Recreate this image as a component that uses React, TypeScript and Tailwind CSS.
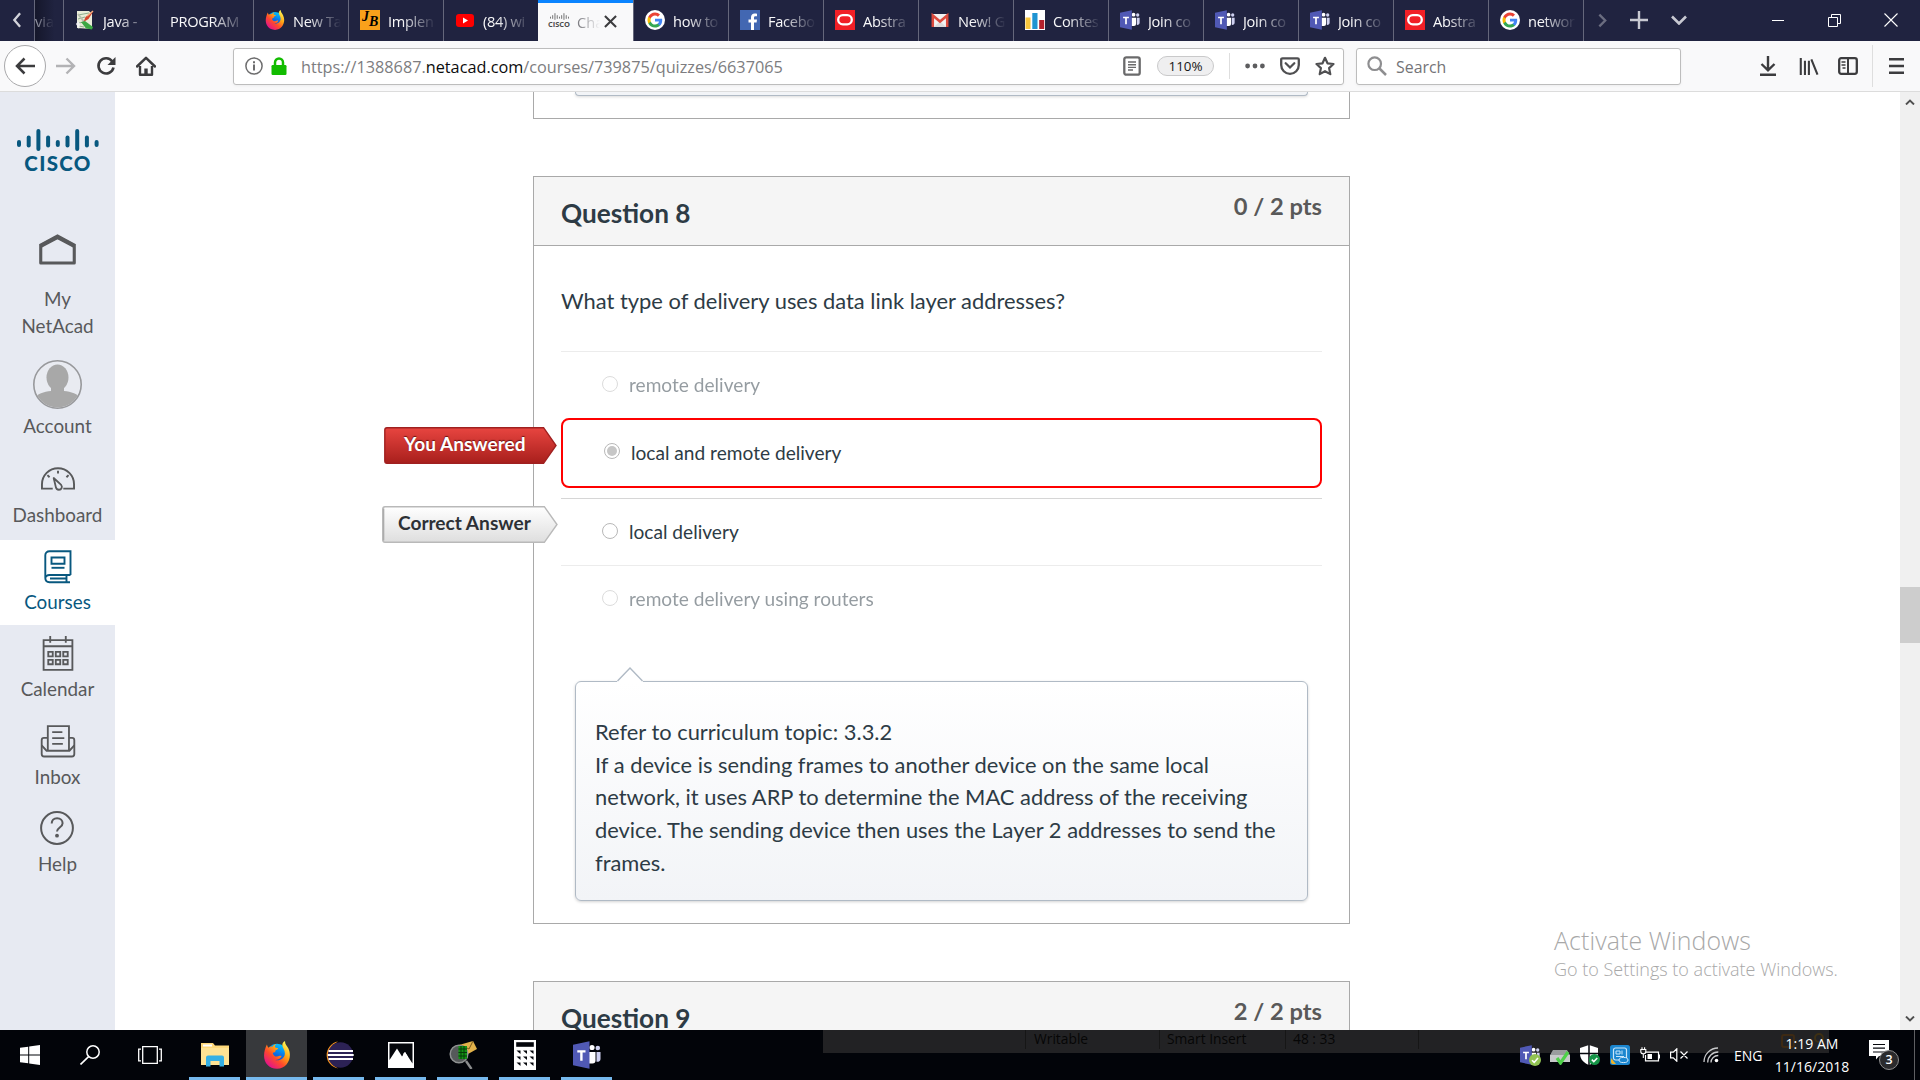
import type { ReactNode } from 'react';

/* ---------- favicons ---------- */

function Notepad() {
  return (
    <svg viewBox="0 0 20 20" className="h-5 w-5 shrink-0">
      <path d="M2 1h12l3 3v15l-15-1z" fill="#e9ecd8" />
      <path d="M3 5l11-2M3 9l7-2M4 13l5-1M4 16l5 1" stroke="#8fae8d" strokeWidth="1" />
      <path d="M3 4l7 9" stroke="#b9bfae" strokeWidth="2" />
      <path d="M18.500 1l-5 8-5 3 2-5z" fill="#d5442d" />
      <path d="M18 1l-6 5" stroke="#f4b183" strokeWidth="1.400" />
      <path d="M6 12l4-1 8 6-1 2.500-6-1z" fill="#3ba843" />
      <path d="M3 11l-2 3 3 5 1-5z" fill="#f3f3f3" />
    </svg>
  );
}

function Firefox({ size = 'h-5 w-5' }: { size?: string }) {
  return (
    <svg viewBox="0 0 32 32" className={`${size} shrink-0`}>
      <defs>
        <linearGradient id="fxBody" x1="0.85" y1="0.1" x2="0.2" y2="0.9">
          <stop offset="0" stopColor="#fff14f" />
          <stop offset="0.35" stopColor="#ffa414" />
          <stop offset="0.65" stopColor="#ff4a2b" />
          <stop offset="1" stopColor="#e31587" />
        </linearGradient>
        <linearGradient id="fxGlobe" x1="0.7" y1="0" x2="0.3" y2="1">
          <stop offset="0" stopColor="#00ccff" />
          <stop offset="0.5" stopColor="#0a6fe6" />
          <stop offset="1" stopColor="#3a2ba0" />
        </linearGradient>
      </defs>
      <circle cx="16" cy="15" r="12" fill="url(#fxGlobe)" />
      <path
        d="M4.500 4c.3 1.500.8 2.700 1.700 3.700 1.400-1.200 3-1.600 4.600-1.200C11.800 5 13.200 4 15 3.500c-.8 1-1.300 2-1.400 3.300.7 1 2 1.200 3.700 1.300-.1 1-.9 1.700-2.600 2.400-.8.400-.8 1.200-.6 2.300-1.500-.3-2.500.3-2.900 1.500.9 2.500 2.500 3.700 4.900 3.500 2.200-.2 3.300-1.500 5.200-.6-1 3.300-4.700 5-8.200 4.200 5.500 2.200 11.500-1.400 11.900-6.900.3-3.900-2.700-6.300-2.900-9.600C21.900 2.900 23 1.200 25.200 0c-.2 3.600 2 5 3.700 8.200C33.800 18 28.600 31.500 16 31.800 6.500 31.800 1 24.500 1.200 16.500 1.300 12 2.600 7.500 4.500 4z"
        fill="url(#fxBody)"
      />
    </svg>
  );
}

function JetBadge() {
  return (
    <span className="relative h-5 w-5 shrink-0 bg-[#f9a11b] font-['Liberation_Serif',serif] text-black">
      <span className="absolute -top-[2px] left-[2px] text-[14px] font-bold italic leading-[17px]">J</span>
      <span className="absolute left-[9px] top-[4px] text-[14px] font-bold italic leading-[16px]">B</span>
    </span>
  );
}

function YouTube() {
  return (
    <svg viewBox="0 0 20 20" className="h-5 w-5 shrink-0">
      <rect x="1" y="4" width="18" height="13" rx="3" fill="#ff0000" />
      <path d="M8 7.500v6l5-3z" fill="#fff" />
    </svg>
  );
}

function Google() {
  return (
    <svg viewBox="0 0 20 20" className="h-5 w-5 shrink-0">
      <circle cx="10" cy="10" r="10" fill="#fff" />
      <g transform="translate(2.500 2.500) scale(0.625)">
        <path fill="#4285F4" d="M23.500 12.300c0-.8-.1-1.600-.2-2.300H12v4.500h6.500c-.3 1.500-1.100 2.700-2.400 3.600v3h3.900c2.200-2.100 3.500-5.100 3.500-8.800z" />
        <path fill="#34A853" d="M12 24c3.200 0 6-1.100 8-2.900l-3.900-3c-1.100.7-2.500 1.200-4.100 1.200-3.100 0-5.800-2.100-6.700-5H1.300v3.100C3.300 21.300 7.300 24 12 24z" />
        <path fill="#FBBC05" d="M5.300 14.300c-.2-.7-.4-1.500-.4-2.300s.1-1.600.4-2.300V6.600h-4C.5 8.200 0 10 0 12s.5 3.800 1.300 5.400z" />
        <path fill="#EA4335" d="M12 4.800c1.800 0 3.300.6 4.600 1.800l3.400-3.400C18 1.200 15.200 0 12 0 7.300 0 3.300 2.700 1.300 6.600l4 3.100c.9-2.800 3.600-4.900 6.700-4.900z" />
      </g>
    </svg>
  );
}

function Facebook() {
  return (
    <svg viewBox="0 0 20 20" className="h-5 w-5 shrink-0">
      <rect width="20" height="20" fill="#4267b2" />
      <path d="M11 20v-7.500H8.500v-3H11V7.300C11 4.800 12.500 3.500 14.700 3.500c1 0 2 .1 2.300.2v2.600h-1.500c-1.200 0-1.500.6-1.500 1.500v1.700h3l-.4 3H14V20z" fill="#fff" />
    </svg>
  );
}

function Oracle() {
  return (
    <svg viewBox="0 0 20 20" className="h-5 w-5 shrink-0">
      <rect width="20" height="20" fill="#f11f26" />
      <rect x="3.200" y="5.200" width="13.600" height="9.200" rx="4.600" fill="none" stroke="#fff" strokeWidth="2.300" />
    </svg>
  );
}

function Gmail() {
  return (
    <svg viewBox="0 0 20 20" className="h-5 w-5 shrink-0">
      <rect x="2" y="4" width="16" height="13" fill="#f2f2f2" />
      <path d="M4 17l6-6 6 6" fill="#dcdcdc" />
      <path d="M2.800 17V5.500L10 11.500l7.200-6V17" fill="none" stroke="#dc4a3d" strokeWidth="2.500" />
    </svg>
  );
}

function BarChart() {
  return (
    <svg viewBox="0 0 20 20" className="h-5 w-5 shrink-0">
      <rect width="20" height="20" fill="#fff" />
      <rect x="0.500" y="7.500" width="5" height="11.500" fill="#f8c63d" />
      <rect x="7.300" y="3" width="5.200" height="16" fill="#1f94d2" />
      <rect x="14.200" y="10" width="5" height="9" fill="#b3202c" />
    </svg>
  );
}

function Teams({ size = 'h-5 w-5' }: { size?: string }) {
  return (
    <svg viewBox="0 0 28 28" className={`${size} shrink-0`}>
      <circle cx="19" cy="6.500" r="2.600" fill="#fff" />
      <circle cx="24.800" cy="7" r="2.300" fill="#cfd1f1" />
      <path d="M16 11h6.500v8.500a3 3 0 0 1-3 3H16z" fill="#fff" />
      <path d="M23.500 11h4v7c0 2-1.500 3-4 2.800z" fill="#cfd1f1" />
      <path d="M0 3.800L16.500.3v27.400L0 24.200z" fill="#5059b5" />
      <path d="M4.300 9.300h8.200v2.300h-2.900v8.200H7.200v-8.200H4.300z" fill="#fff" />
    </svg>
  );
}

const ciscoBars = [
  [0, 11, 7], [9.700, 6.500, 12], [19.400, 0, 22], [29.100, 6.500, 12], [38.800, 11, 7],
  [48.500, 6.500, 12], [58.200, 0, 22], [67.900, 6.500, 12], [77.600, 11, 7],
];

function CiscoBars({ className, color }: { className: string; color: string }) {
  return (
    <svg viewBox="0 0 82 22" preserveAspectRatio="none" className={className}>
      {ciscoBars.map(([x, y, h]) => (
        <rect key={x} x={x} y={y} width="4" height={h} rx="2" fill={color} />
      ))}
    </svg>
  );
}

/* ---------- browser chrome ---------- */

const tabs: { icon?: ReactNode; label: string }[] = [
  { icon: <Notepad />, label: 'Java -' },
  { label: 'PROGRAM' },
  { icon: <Firefox />, label: 'New Ta' },
  { icon: <JetBadge />, label: 'Implen' },
  { icon: <YouTube />, label: '(84) wi' },
];

const tabsAfter: { icon?: ReactNode; label: string }[] = [
  { icon: <Google />, label: 'how to' },
  { icon: <Facebook />, label: 'Facebo' },
  { icon: <Oracle />, label: 'Abstra' },
  { icon: <Gmail />, label: 'New! G' },
  { icon: <BarChart />, label: 'Contes' },
  { icon: <Teams />, label: 'Join co' },
  { icon: <Teams />, label: 'Join co' },
  { icon: <Teams />, label: 'Join co' },
  { icon: <Oracle />, label: 'Abstra' },
  { icon: <Google />, label: 'networ' },
];

function Tab({ icon, label }: { icon?: ReactNode; label: string }) {
  return (
    <div className="flex h-[41px] w-[95px] shrink-0 items-center border-l border-[#65677b] pl-[11px]">
      {icon && <span className="mb-px mr-2 flex w-5 items-center justify-center">{icon}</span>}
      <span className="mr-[7px] mt-px min-w-0 flex-1 overflow-hidden whitespace-nowrap text-[14.600px] leading-[22px] tracking-[-0.300px] text-[#f9f9fa] [mask-image:linear-gradient(to_right,#000_calc(100%_-_34px),transparent)]">
        {label}
      </span>
    </div>
  );
}

function TabBar() {
  return (
    <div className="flex h-[41px] bg-[#202340]">
      <div className="flex w-[34px] items-center justify-center pb-px">
        <svg viewBox="0 0 10 18" className="h-[16px] w-[10px]">
          <path d="M8.500 1.500L2 9l6.500 7.500" fill="none" stroke="#d2d3da" strokeWidth="2.600" />
        </svg>
      </div>
      <div className="flex w-[29px] items-center border-l border-[#65677b] bg-gradient-to-r from-[#15172b] to-[#202340] to-70% pt-px">
        <span className="overflow-hidden text-[14.600px] leading-[22px] text-[#a0a2b0] [mask-image:linear-gradient(to_right,#000,transparent_19px)]">via</span>
      </div>
      {tabs.map((t) => (
        <Tab key={t.label} {...t} />
      ))}
      <div className="flex h-[41px] w-[95px] items-center border-t-[3px] border-[#0a84ff] bg-[#f9f9fa] pl-[11px]">
        <span className="-mt-[4px] flex w-5 flex-col items-center">
          <CiscoBars className="h-[7px] w-[19px]" color="#6b6b6b" />
          <span className="text-[7.500px] font-bold leading-[8px] text-[#4c4c4c]">CISCO</span>
        </span>
        <span className="-mt-px ml-2 w-[23px] overflow-hidden text-[14.600px] leading-[22px] text-[#77777c] [mask-image:linear-gradient(to_right,#000,transparent)]">Cha</span>
        <svg viewBox="0 0 14 14" className="-mt-[2px] ml-[4px] h-[13px] w-[13px]">
          <path d="M1 1l12 12M13 1L1 13" stroke="#3c3c3e" strokeWidth="2.200" />
        </svg>
      </div>
      {tabsAfter.map((t, i) => (
        <Tab key={i} {...t} />
      ))}
      <div className="flex flex-1 items-center border-l border-[#65677b] pb-px">
        <svg viewBox="0 0 10 16" className="ml-[14px] h-[15px] w-[9px]">
          <path d="M1.500 1.500L8 8l-6.500 6.500" fill="none" stroke="#6b6d80" strokeWidth="2.600" />
        </svg>
        <svg viewBox="0 0 18 18" className="ml-[23px] h-[18px] w-[18px]">
          <path d="M9 0v18M0 9h18" stroke="#c8c9d2" strokeWidth="2.400" />
        </svg>
        <svg viewBox="0 0 16 10" className="ml-[23px] h-[10px] w-4">
          <path d="M1 1.500l7 7 7-7" fill="none" stroke="#c8c9d2" strokeWidth="2.600" />
        </svg>
        <span className="ml-[85px] h-px w-3 bg-white" />
        <svg viewBox="0 0 13 13" className="ml-[44px] h-[13px] w-[13px]">
          <path d="M.5 3.500h9v9h-9zM3.500 3.500v-3h9v9h-3" fill="none" stroke="#fff" />
        </svg>
        <svg viewBox="0 0 14 14" className="ml-[43px] h-[14px] w-[14px]">
          <path d="M.5.5l13 13M13.500.5l-13 13" stroke="#fff" strokeWidth="1.100" />
        </svg>
      </div>
    </div>
  );
}

function Toolbar() {
  return (
    <div className="flex h-[51px] items-center border-b border-[#dcdcdc] bg-[#f9f9fa]">
      <span className="ml-[4px] flex h-[42px] w-[42px] items-center justify-center rounded-full border border-[#a9a9ab] bg-white">
        <svg viewBox="0 0 20 18" className="h-[18px] w-5">
          <path d="M20 9H2M9.500 1.500L2 9l7.500 7.500" fill="none" stroke="#3c3c3e" strokeWidth="2.500" />
        </svg>
      </span>
      <svg viewBox="0 0 20 18" className="ml-[10px] h-[18px] w-5">
        <path d="M0 9h18M10.500 1.500L18 9l-7.500 7.500" fill="none" stroke="#b3b3b5" strokeWidth="2.400" />
      </svg>
      <svg viewBox="0 0 20 20" className="ml-[20px] h-5 w-5">
        <path d="M16.300 5.500A7.600 7.600 0 1 0 17.500 11.500" fill="none" stroke="#3c3c3e" strokeWidth="2.600" />
        <path d="M19.500 1v8h-8z" fill="#3c3c3e" />
      </svg>
      <svg viewBox="0 0 20 20" className="ml-[20px] h-5 w-5">
        <path d="M1 10.500L10 1.800l9 8.700" fill="none" stroke="#3c3c3e" strokeWidth="2.500" strokeLinecap="round" strokeLinejoin="round" />
        <path d="M4 10v8.700h12V10" fill="none" stroke="#3c3c3e" strokeWidth="2.400" strokeLinejoin="round" />
        <path d="M8.300 12.500h3.400V18H8.300z" fill="#3c3c3e" />
      </svg>
      <div className="ml-[77px] flex h-[37px] w-[1111px] items-center rounded-[3px] border border-[#bdbdbd] bg-white shadow-[0_1px_3px_rgba(0,0,0,0.050)]">
        <svg viewBox="0 0 18 18" className="ml-[11px] h-[18px] w-[18px]">
          <circle cx="9" cy="9" r="8.100" fill="none" stroke="#6d6d6e" strokeWidth="1.500" />
          <path d="M9 7.600v6M9 4.300v1.900" stroke="#6d6d6e" strokeWidth="2" />
        </svg>
        <svg viewBox="0 0 16 18" className="ml-[8px] h-[18px] w-4">
          <path d="M4 9V5.500a4 4 0 0 1 8 0V9" fill="none" stroke="#12bc00" strokeWidth="2.500" />
          <rect x="0.500" y="8" width="15" height="10" rx="1.200" fill="#12bc00" />
        </svg>
        <span className="ml-[14px] flex-1 whitespace-nowrap pt-[3px] text-[16.260px] text-[#7d7d80]">
          https://1388687.<span className="text-[#0c0c0d]">netacad.com</span>/courses/739875/quizzes/6637065
        </span>
        <svg viewBox="0 0 18 20" className="h-5 w-[18px]">
          <rect x="1.300" y="1.300" width="15.400" height="17.400" rx="2" fill="none" stroke="#6a6a6b" strokeWidth="2.300" />
          <path d="M5 6h8M5 8.700h8M5 11.400h8M5 14h5" stroke="#6a6a6b" strokeWidth="1.400" />
        </svg>
        <span className="ml-4 flex h-5 w-[57px] items-center justify-center rounded-full border border-[#c9c9ca] bg-[#efeff0] pt-px text-[13.400px] text-[#161616]">110%</span>
        <span className="ml-[15px] h-[26px] w-px bg-[#dedede]" />
        <svg viewBox="0 0 20 6" className="ml-[15px] h-[6px] w-5">
          <circle cx="2.600" cy="3" r="2.400" fill="#5d5d5f" />
          <circle cx="10" cy="3" r="2.400" fill="#5d5d5f" />
          <circle cx="17.400" cy="3" r="2.400" fill="#5d5d5f" />
        </svg>
        <svg viewBox="0 0 20 18" className="ml-[15px] h-[18px] w-5">
          <path d="M2.500 1.300h15a1.300 1.300 0 0 1 1.300 1.300V8a8.800 8.800 0 0 1-17.600 0V2.600a1.300 1.300 0 0 1 1.300-1.300z" fill="none" stroke="#4f4f51" strokeWidth="2.300" />
          <path d="M5.700 6.300L10 10.500l4.300-4.200" fill="none" stroke="#4f4f51" strokeWidth="2.300" strokeLinecap="round" />
        </svg>
        <svg viewBox="0 0 20 20" className="ml-[15px] mr-[8px] h-5 w-5">
          <path d="M10 1.800l2.500 5.500 6 .7-4.400 4.100 1.200 6L10 15.200l-5.300 2.900 1.200-6L1.500 8l6-.7z" fill="none" stroke="#4f4f51" strokeWidth="2.200" strokeLinejoin="round" />
        </svg>
      </div>
      <div className="ml-[12px] flex h-[37px] w-[325px] items-center rounded-[3px] border border-[#bdbdbd] bg-white shadow-[0_1px_3px_rgba(0,0,0,0.050)]">
        <svg viewBox="0 0 20 20" className="ml-[10px] h-5 w-5">
          <circle cx="7.700" cy="7.700" r="6.300" fill="none" stroke="#8e8e90" strokeWidth="2.200" />
          <path d="M12.500 12.500l6.500 6.500" stroke="#8e8e90" strokeWidth="2.500" />
        </svg>
        <span className="ml-[9px] pt-[3px] text-[15.900px] text-[#747477]">Search</span>
      </div>
      <svg viewBox="0 0 16 20" className="ml-[79px] h-5 w-4">
        <path d="M8 0v14M1.500 8L8 14.300 14.500 8M0 18.700h16" fill="none" stroke="#3c3c3e" strokeWidth="2.400" />
      </svg>
      <svg viewBox="0 0 20 18" className="ml-[23px] h-[17px] w-5">
        <path d="M1.300 0v18M5.700 3v15M9.900 3v15M12.500 1.500L19 17.500" fill="none" stroke="#3c3c3e" strokeWidth="2.200" />
      </svg>
      <svg viewBox="0 0 20 18" className="ml-[19px] h-[18px] w-5">
        <rect x="1.200" y="1.200" width="17.600" height="15.600" rx="2" fill="none" stroke="#3c3c3e" strokeWidth="2.300" />
        <path d="M10 1v16" stroke="#3c3c3e" strokeWidth="2" />
        <path d="M3.500 5h4M3.500 8h4M4.500 11h3" stroke="#3c3c3e" strokeWidth="1.500" />
      </svg>
      <span className="ml-[14px] h-[42px] w-px bg-[#dedede]" />
      <svg viewBox="0 0 15 16" className="ml-[16px] h-4 w-[15px]">
        <path d="M0 1.300h15M0 8h15M0 14.700h15" stroke="#3c3c3e" strokeWidth="2.400" />
      </svg>
    </div>
  );
}

/* ---------- course sidebar ---------- */

function NavItem({ icon, label, className }: { icon: ReactNode; label: ReactNode; className: string }) {
  return (
    <div className={`flex flex-col items-center text-center text-[18.850px] leading-[27px] ${className}`}>
      {icon}
      {label}
    </div>
  );
}

function Sidebar() {
  return (
    <nav className="flex w-[115px] shrink-0 flex-col bg-[#e7eaf2] font-['Lato',sans-serif] text-[#58595b]">
      <div className="flex h-[142px] flex-col items-center pt-[37px]">
        <CiscoBars className="h-[22px] w-[82px]" color="#08587f" />
        <span className="mt-[2px] pl-[1px] text-[20.500px] font-black leading-[21px] tracking-[1.300px] text-[#08587f]">CISCO</span>
      </div>
      <NavItem
        className="h-[105px]"
        icon={
          <svg viewBox="0 0 39 32" className="mb-5 h-8 w-[39px]">
            <path d="M2.200 30V12L19.500 3l17.300 9v18z" fill="none" stroke="#58595b" strokeWidth="3.200" strokeLinejoin="round" />
            <path d="M1.500 12.500L19.500 2.800l18 9.700" fill="none" stroke="#58595b" strokeWidth="4.600" />
          </svg>
        }
        label={<>My<br />NetAcad</>}
      />
      <NavItem
        className="mt-[21px] h-[79px]"
        icon={
          <svg viewBox="0 0 49 49" className="mb-[3px] h-[49px] w-[49px]">
            <defs>
              <clipPath id="avatar"><circle cx="24.500" cy="24.500" r="23" /></clipPath>
            </defs>
            <circle cx="24.500" cy="24.500" r="23.700" fill="#e9ebf1" stroke="#98999c" strokeWidth="1.600" />
            <g clipPath="url(#avatar)" fill="#a8a8a8">
              <ellipse cx="24.500" cy="17.500" rx="11" ry="13" />
              <path d="M18 26h13v5c8 1 16 3 18 10v8H0v-8c2-7 10-9 18-10z" />
            </g>
          </svg>
        }
        label="Account"
      />
      <NavItem
        className="mt-[28px] h-[61px]"
        icon={
          <svg viewBox="0 0 36 25" className="mb-[10px] h-[25px] w-9">
            <path d="M12.500 22.500H1.300V18a16.700 16.700 0 0 1 33.400 0v4.500H23.500" fill="none" stroke="#58595b" strokeWidth="2" />
            <path d="M13.500 11.500l7.800 7.200c1.600 2 .4 5-2.300 5-2 0-3-1-3.300-3z" fill="none" stroke="#58595b" strokeWidth="1.900" strokeLinejoin="round" />
            <path d="M18 3.800v3M7 8.500l2.200 2.200M29 8.500l-2.200 2.200" stroke="#58595b" strokeWidth="2" />
          </svg>
        }
        label="Dashboard"
      />
      <NavItem
        className="mt-[12px] h-[85px] bg-white pt-[10px] text-[#08587f]"
        icon={
          <svg viewBox="0 0 28 34" className="mb-[4px] h-[34px] w-7">
            <g fill="none" stroke="#08587f" strokeWidth="1.900">
              <path d="M26.500 25V1.300H5.500C3 1.300 1.300 3 1.300 5.200v22.500c0 2.600 1.700 4.500 4.200 4.500H26M26.500 25H5.500C3 25 1.300 26.300 1.300 28.500M6 28.500h16M22.500 25v7" />
              <path d="M7.500 7.500h13v6.300h-13z" />
              <path d="M7.500 17.800h13" />
            </g>
          </svg>
        }
        label="Courses"
      />
      <NavItem
        className="mt-[11px] h-[66px]"
        icon={
          <svg viewBox="0 0 32 36" className="mb-[4px] h-9 w-8">
            <g fill="none" stroke="#58595b" strokeWidth="1.900">
              <path d="M1.200 4.300h29.600v30.500H1.200zM1.200 10.500h29.600M8 0v7M24 0v7" />
              <path d="M6 16.300h4.600v4.600H6zM13.700 16.300h4.600v4.600h-4.600zM21.400 16.300H26v4.600h-4.600zM6 24.500h4.600v4.600H6zM13.700 24.500h4.600v4.600h-4.600zM21.400 24.500H26v4.600h-4.600z" />
            </g>
          </svg>
        }
        label="Calendar"
      />
      <NavItem
        className="mt-[23px] h-[65px]"
        icon={
          <svg viewBox="0 0 36 34" className="mb-[5px] h-[34px] w-9">
            <g fill="none" stroke="#58595b" strokeWidth="1.900">
              <path d="M7.500 26.500V1.200h21.800v25.300" />
              <path d="M7.500 13.300H3.500a2.300 2.300 0 0 0-2.300 2.300V30a2.500 2.500 0 0 0 2.500 2.500h28.600a2.500 2.500 0 0 0 2.500-2.500V15.600a2.300 2.300 0 0 0-2.300-2.300h-3.200" />
              <path d="M1.200 21l5 5.500h23.600l5-5.500M12 7.300h10.500M12 13.500h12.500M12 19.500h11" />
            </g>
          </svg>
        }
        label="Inbox"
      />
      <NavItem
        className="mt-[21px]"
        icon={
          <svg viewBox="0 0 34 34" className="mb-[5px] mr-px h-[34px] w-[34px]">
            <circle cx="17" cy="17" r="15.900" fill="none" stroke="#58595b" strokeWidth="2" />
            <path d="M11.700 12.500c0-3 2-5.300 5.400-5.300s5.500 2.200 5.500 5c0 4.300-5.600 4.300-5.600 8.300" fill="none" stroke="#58595b" strokeWidth="2" />
            <circle cx="17" cy="24.700" r="1.900" fill="#58595b" />
          </svg>
        }
        label="Help"
      />
    </nav>
  );
}

/* ---------- quiz ---------- */

function Radio({ selected }: { selected?: boolean }) {
  return (
    <span className="flex h-4 w-4 items-center justify-center rounded-full border border-[#b8b8b8] bg-white">
      {selected && <span className="h-[10px] w-[10px] rounded-full bg-[#c6c6c6]" />}
    </span>
  );
}

function AnswerTag({ kind, children }: { kind: 'wrong' | 'right'; children: string }) {
  const wrong = kind === 'wrong';
  return (
    <span className={wrong ? 'absolute -left-[179px] top-[7px] h-[37px] w-[173px]' : 'absolute -left-[179px] top-[7px] h-[37px] w-[176px]'}>
      <svg viewBox="0 0 174 37" preserveAspectRatio="none" className="absolute inset-0 h-full w-full">
        <defs>
          <linearGradient id={kind} x1="0" y1="0" x2="0" y2="1">
            <stop offset="0" stopColor={wrong ? '#e84540' : '#ffffff'} />
            <stop offset="1" stopColor={wrong ? '#a81f1c' : '#dedede'} />
          </linearGradient>
        </defs>
        <path d="M3 .7h157.500L173 18.500 160.500 36.300H3A2.300 2.300 0 0 1 .8 34V3A2.300 2.300 0 0 1 3 .7z" fill={`url(#${kind})`} stroke={wrong ? '#a02020' : '#b9b9b9'} strokeWidth="1.400" />
        {!wrong && <path d="M1.500 2.500v32" stroke="#acacac" strokeWidth="1.600" />}
      </svg>
      <span
        className={
          wrong
            ? 'relative block pl-[20px] text-[19.100px] font-bold leading-[33px] text-white [text-shadow:0_-1px_1px_rgba(60,0,0,0.700)]'
            : 'relative block pl-[16px] text-[19.100px] font-bold leading-[33px] text-[#2d3035]'
        }
      >
        {children}
      </span>
    </span>
  );
}

function Answer({ label, faded, tag }: { label: string; faded?: boolean; tag?: ReactNode }) {
  return (
    <div className={faded ? 'relative border-t border-[#ececec]' : 'relative border-t border-[#d6d6d6]'}>
      <div className={faded ? 'flex h-[66px] items-center gap-[11px] pl-[41px] opacity-50' : 'flex h-[66px] items-center gap-[11px] pl-[41px]'}>
        <span className="-mt-[3px]"><Radio /></span>
        <span className="whitespace-nowrap">{label}</span>
      </div>
      {tag}
    </div>
  );
}

function QuestionHeader({ title, points }: { title: string; points: string }) {
  return (
    <div className="flex h-[69px] items-center justify-between border-b border-[#a9a9a9] bg-[#f5f5f5] px-[27px] font-bold">
      <h2 className="mt-[4px] text-[26.200px] leading-[34px]">{title}</h2>
      <span className="-mt-[10px] text-[23.700px] leading-[30px] text-[#595959]">{points}</span>
    </div>
  );
}

function Quiz() {
  return (
    <main className="relative flex-1 overflow-hidden bg-white font-['Lato',sans-serif] text-[#2d3b45]">
      <div className="ml-[418px] w-[817px]">
        <section className="h-[27px] border-x border-b border-[#a9a9a9]">
          <div className="ml-[41px] h-[4px] w-[733px] rounded-b-[6px] border-x border-b border-[#b0bac5] bg-[#f2f4f7] shadow-[0_1px_3px_rgba(0,0,0,0.150)]" />
        </section>

        <section className="mt-[57px] h-[748px] border border-[#a9a9a9]">
          <QuestionHeader title="Question 8" points="0 / 2 pts" />
          <div className="px-[27px] pt-[38px]">
            <p className="mb-[34px] text-[21.900px] leading-[33px]">What type of delivery uses data link layer addresses?</p>
            <div className="text-[19.120px]">
              <Answer label="remote delivery" faded />
              <div className="relative mb-[10px] flex h-[70px] items-center gap-[11px] rounded-lg border-2 border-[#ff0000] pl-[41px]">
                <span className="-mt-[4px]"><Radio selected /></span>
                <span>local and remote delivery</span>
                <AnswerTag kind="wrong">You Answered</AnswerTag>
              </div>
              <Answer label="local delivery" tag={<AnswerTag kind="right">Correct Answer</AnswerTag>} />
              <Answer label="remote delivery using routers" faded />
            </div>
          </div>
          <div className="relative ml-[41px] mt-[49px] h-[220px] w-[733px] rounded-md border border-[#b0bac5] bg-gradient-to-b from-white to-[#f2f4f7] pl-[19px] pr-[18px] pt-[34px] text-[21.880px] leading-[32.720px] shadow-[0_1px_3px_rgba(0,0,0,0.180)]">
            <svg viewBox="0 0 26 15" className="absolute -top-[15px] left-[41px] h-[15px] w-[26px]">
              <path d="M0 14.500L13 1l13 13.500V15H0z" fill="#fff" />
              <path d="M.5 14L13 1l12.500 13" fill="none" stroke="#b0bac5" strokeWidth="1.400" />
            </svg>
            <p>Refer to curriculum topic: 3.3.2</p>
            <p>If a device is sending frames to another device on the same local network, it uses ARP to determine the MAC address of the receiving device. The sending device then uses the Layer 2 addresses to send the frames.</p>
          </div>
        </section>

        <section className="mt-[57px] border border-[#a9a9a9]">
          <QuestionHeader title="Question 9" points="2 / 2 pts" />
        </section>
      </div>

      <div className="absolute left-[1439px] top-[829px] whitespace-nowrap font-['Open_Sans',sans-serif] text-[#a8a8a8]">
        <div className="text-[24.900px] font-light leading-[38px] tracking-[0.100px]">Activate Windows</div>
        <div className="text-[18px] font-light leading-[21px]">Go to Settings to activate Windows.</div>
      </div>
    </main>
  );
}

function Scrollbar() {
  return (
    <div className="flex w-5 shrink-0 flex-col items-center bg-[#f0f0f0]">
      <svg viewBox="0 0 10 6" className="mt-[7px] h-[6px] w-[10px]">
        <path d="M1 5.500l4-4 4 4" fill="none" stroke="#505050" strokeWidth="1.900" />
      </svg>
      <span className="mt-[482px] h-[56px] w-full bg-[#cdcdcd]" />
      <svg viewBox="0 0 10 6" className="mt-auto mb-[8px] h-[6px] w-[10px]">
        <path d="M1 .5l4 4 4-4" fill="none" stroke="#505050" strokeWidth="1.900" />
      </svg>
    </div>
  );
}

/* ---------- Windows taskbar ---------- */

function TaskButton({ children, active }: { children: ReactNode; active?: boolean }) {
  return (
    <div className={active ? 'flex h-full w-[61px] flex-col items-center bg-[#37393c]' : 'flex h-full w-[61px] flex-col items-center'}>
      <div className="flex flex-1 items-center pt-[3px]">{children}</div>
      <span className={active ? 'h-[3px] w-full bg-[#76b9ed]' : 'h-[3px] w-[51px] bg-[#76b9ed]'} />
    </div>
  );
}

function Taskbar() {
  return (
    <div className="relative flex h-[50px] bg-[#020409] text-white">
      <div className="absolute left-[823px] top-0 flex h-[23px] w-[1006px] overflow-hidden bg-[#222224] text-[13.800px] leading-[17px] text-[#060606]">
        <span className="ml-[202px] h-[19px] w-[134px] border-l border-[#161616] pl-[8px]">Writable</span>
        <span className="h-[19px] w-[126px] border-l border-[#161616] pl-[7px]">Smart Insert</span>
        <span className="h-[19px] w-[134px] border-x border-[#161616] pl-[7px]">48 : 33</span>
        <span className="ml-[362px] mt-[4px] h-[14px] w-[14px] rounded-[3px] border-2 border-[#3d2913]" />
        <span className="ml-[19px] mt-[3px] h-[10px] w-[10px] rounded-full border-2 border-[#3d2f13]" />
      </div>

      <svg viewBox="0 0 20 20" className="ml-[20px] mt-[15px] h-5 w-5">
        <path d="M0 2.800L8.200 1.700v7.800H0zM9.200 1.500L20 0v9.500H9.200zM0 10.500h8.200v7.800L0 17.200zM9.200 10.500H20V20L9.200 18.500z" fill="#fff" />
      </svg>
      <svg viewBox="0 0 20 20" className="ml-[40px] mt-[15px] h-5 w-5">
        <circle cx="13" cy="7" r="6.200" fill="none" stroke="#fff" strokeWidth="1.500" />
        <path d="M8.600 11.600L.5 19.500" stroke="#fff" strokeWidth="1.600" />
      </svg>
      <svg viewBox="0 0 24 18" className="ml-[38px] mt-[16px] h-[18px] w-6">
        <path d="M4.700.7h14.600v16.600H4.700zM3 3.200H.7v11.600H3M21 3.200h2.300v11.600H21" fill="none" stroke="#fff" strokeWidth="1.300" />
      </svg>

      <div className="ml-[22px] flex gap-px">
        <TaskButton>
          <svg viewBox="0 0 28 24" className="h-6 w-7">
            <path d="M0 0h12l2 2.500h14V22H0z" fill="#ffd97a" />
            <path d="M0 5h28v17H0z" fill="#ffe394" />
            <path d="M2 1.500h9v2H2z" fill="#fff" />
            <path d="M5 23.500v-9a2 2 0 0 1 2-2h14a2 2 0 0 1 2 2v9h-4.500v-5.500h-9v5.500z" fill="#36b0e4" />
          </svg>
        </TaskButton>
        <TaskButton active><Firefox size="h-7 w-7" /></TaskButton>
        <TaskButton>
          <svg viewBox="0 0 30 28" className="h-7 w-[30px]">
            <path d="M14 .5A13.700 13.700 0 0 0 14 27.500 15 15 0 0 1 14 .5z" fill="#f7941e" />
            <circle cx="16.500" cy="14" r="12.700" fill="#2c2255" />
            <path d="M4.500 10h24.500M3.700 14h26M4.500 18h24.500" stroke="#fff" strokeWidth="1.900" />
          </svg>
        </TaskButton>
        <TaskButton>
          <svg viewBox="0 0 26 26" className="h-[26px] w-[26px]">
            <path d="M0 0h26v26H0z" fill="#fff" />
            <path d="M1.500 1.500h23v20L17 10l-3 4.500L9 6.500 1.500 18z" fill="#05070c" />
            <path d="M15 12l2-2 3 5-1.500 3z" fill="#fff" />
          </svg>
        </TaskButton>
        <TaskButton>
          <svg viewBox="0 0 28 28" className="h-7 w-7">
            <path d="M10 4l14-4 4 8-9 5-9-3z" fill="#e2b24a" />
            <path d="M11 3.500l9 4.500 4-8" fill="none" stroke="#7a5a1c" />
            <circle cx="10" cy="13" r="8.800" fill="#55595a" stroke="#8f9292" strokeWidth="1.500" />
            <path d="M9.500 5H18v13H9.500z" fill="#129212" />
            <path d="M12 5v13M15 5v13M9.500 8H18M9.500 11.500H18M9.500 15H18" stroke="#06380a" />
            <path d="M17 20l5.500 8" stroke="#8b8d8e" strokeWidth="2.400" />
          </svg>
        </TaskButton>
        <TaskButton>
          <svg viewBox="0 0 22 30" className="h-[30px] w-[22px]">
            <path d="M0 0h22v30H0z" fill="#fff" />
            <path d="M2.200 2.200h17.600v4.600H2.200z" fill="#05070c" />
            {[10.500, 16.500, 22.500].map((y) =>
              [2.500, 9, 15.500].map((x) => <path key={`${x}-${y}`} d={`M${x} ${y}h4v3.500z`} fill="#05070c" />),
            )}
          </svg>
        </TaskButton>
        <TaskButton><Teams size="h-7 w-7" /></TaskButton>
      </div>

      <div className="relative ml-auto flex items-center text-[14px]">
        <span className="relative h-5 w-5">
          <Teams size="h-5 w-5" />
          <svg viewBox="0 0 12 12" className="absolute -right-px -bottom-px h-3 w-3">
            <circle cx="6" cy="6" r="6" fill="#92c353" />
            <path d="M3 6.200l2.200 2.200L9 4" fill="none" stroke="#fff" strokeWidth="1.600" />
          </svg>
        </span>
        <svg viewBox="0 0 20 18" className="ml-[10px] mt-[2px] h-[18px] w-5">
          <path d="M3 3h14l3 5v7H0V8z" fill="#9a9c9e" />
          <path d="M0 8h20v7H0z" fill="#c7c9ca" />
          <path d="M7 11l3.500 5L18 5" fill="none" stroke="#4fd04a" strokeWidth="3.200" />
        </svg>
        <svg viewBox="0 0 20 20" className="ml-[10px] h-5 w-5">
          <path d="M9 0l9 3v6c0 5-4 9-9 11-5-2-9-6-9-11V3z" fill="#fff" />
          <path d="M9 0v20M0 8.500h18" stroke="#05070c" strokeWidth="1.500" />
          <circle cx="14.500" cy="14.500" r="5.500" fill="#159447" />
          <path d="M11.800 14.600l2 2 3.500-3.700" fill="none" stroke="#fff" strokeWidth="1.500" />
        </svg>
        <svg viewBox="0 0 20 20" className="ml-[10px] h-5 w-5">
          <rect width="20" height="20" rx="2.500" fill="#1b86cf" />
          <path d="M1 13v4a2 2 0 0 0 2 2h3z" fill="#f0b429" />
          <rect x="3.500" y="3" width="13" height="12" rx="2" fill="none" stroke="#c9e6fa" strokeWidth="1.200" />
          <path d="M6 6h4v3H6zM12 5.500v4M6 11.500h8" fill="none" stroke="#c9e6fa" />
          <ellipse cx="13.500" cy="15" rx="4.500" ry="2.600" fill="#1b86cf" stroke="#e5f4ff" strokeWidth="0.900" />
        </svg>
        <svg viewBox="0 0 20 16" className="ml-[10px] h-4 w-5">
          <path d="M5.500 5.200h13v8.600h-13V8M18.500 8h1v3h-1" fill="none" stroke="#fff" strokeWidth="1.200" />
          <path d="M7.500 7h4.500v5H7.500z" fill="#fff" />
          <path d="M.8 2.500h5v2.300c0 1.200-.8 2-2.500 2S.8 6 .8 4.800zM2 2.500V.3M4.600 2.500V.3M3.300 7v4" fill="none" stroke="#fff" strokeWidth="1.100" />
        </svg>
        <svg viewBox="0 0 18 14" className="ml-[10px] h-[14px] w-[18px]">
          <path d="M.6 4.200h2.700L6.800.8v12.400L3.300 9.800H.6zM10.500 3.500l7 7M17.500 3.500l-7 7" fill="none" stroke="#fff" strokeWidth="1.200" />
        </svg>
        <svg viewBox="0 0 16 16" className="ml-[15px] h-4 w-4">
          <path d="M1 15A14 14 0 0 1 15 1M4.700 15.500A10.500 10.500 0 0 1 15.300 5M8 15.500a7 7 0 0 1 7.300-7" fill="none" stroke="#c9cacc" strokeWidth="1.300" />
          <circle cx="13.500" cy="13.500" r="1.800" fill="#fff" />
        </svg>
        <span className="ml-[15px] mt-px w-[29px]">ENG</span>
        <div className="ml-[9px] mr-px w-[80px] text-center leading-[23px]">
          <div>1:19 AM</div>
          <div>11/16/2018</div>
        </div>
        <span className="relative ml-[16px] mr-[15px] h-[30px] w-[30px]">
          <svg viewBox="0 0 20 20" className="absolute left-0 top-0 h-5 w-5">
            <path d="M0 0h20v16H10l-3 3.500V16H0z" fill="#fff" />
            <path d="M4 4.500h12M4 8.200h12M4 12h12" stroke="#05070c" strokeWidth="1.200" />
          </svg>
          <span className="absolute bottom-0 right-0 flex h-5 w-5 items-center justify-center rounded-full border border-[#8d8d8d] bg-[#2b2b2d] text-[12.500px] font-semibold">3</span>
        </span>
        <span className="mr-[5px] h-full w-px bg-[#5e5f62]" />
      </div>
    </div>
  );
}

export default function App() {
  return (
    <div className="flex h-[1080px] w-[1920px] flex-col overflow-hidden bg-white font-['Open_Sans',sans-serif]">
      <TabBar />
      <Toolbar />
      <div className="flex h-[938px] overflow-hidden">
        <Sidebar />
        <Quiz />
        <Scrollbar />
      </div>
      <Taskbar />
    </div>
  );
}
